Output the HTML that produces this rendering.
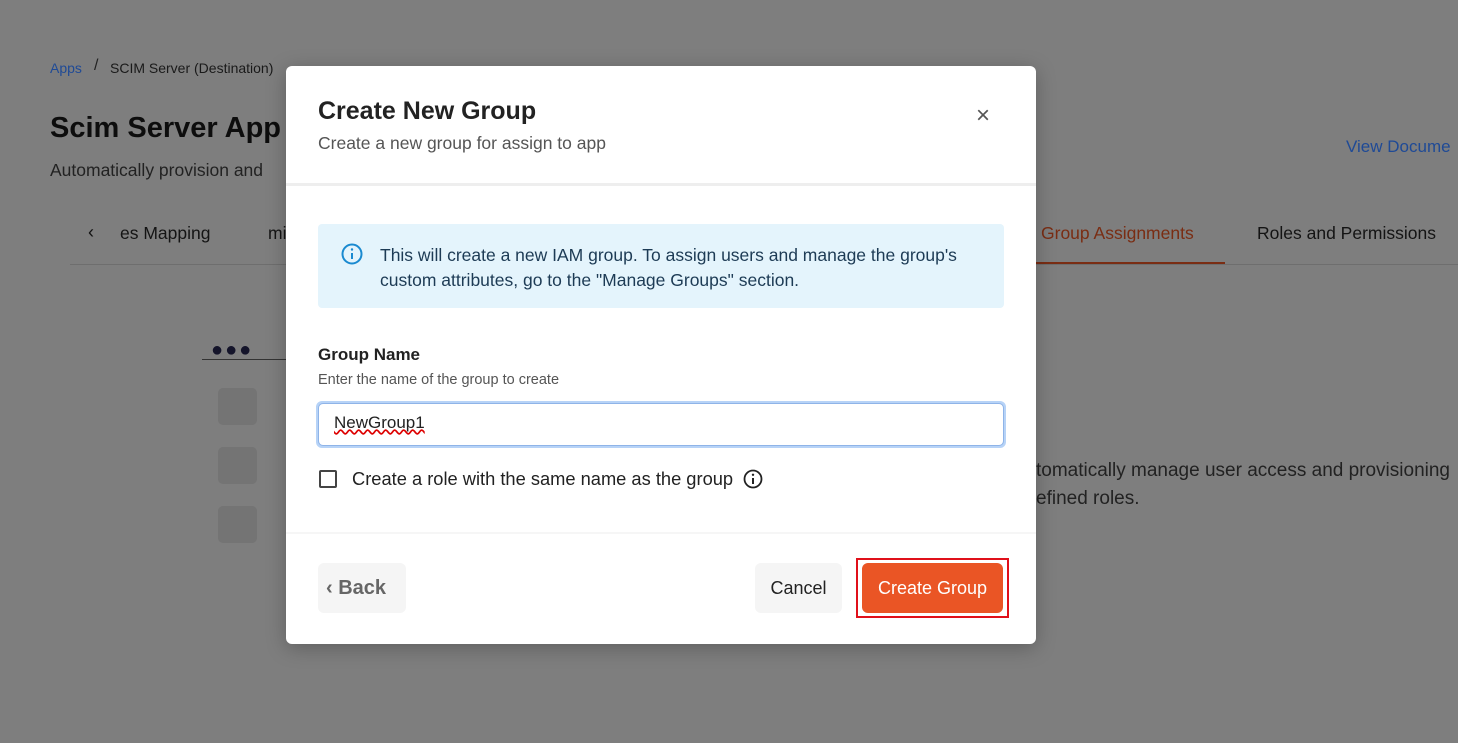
<!DOCTYPE html>
<html><head><style>
*{box-sizing:border-box;margin:0;padding:0}
body{width:1458px;height:743px;overflow:hidden;background:#7e7e7e;font-family:"Liberation Sans",sans-serif;position:relative}
.a{position:absolute;white-space:nowrap}
.m{position:absolute;left:286px;top:66px;width:750px;height:578px;background:#fff;border-radius:6px;box-shadow:0 4px 20px rgba(0,0,0,.25)}
</style></head><body>
<div class="a" style="left:50px;top:60px;font-size:14px;color:#1f4a96">Apps</div>
<div class="a" style="left:94px;top:57px;font-size:16px;color:#222">/</div>
<div class="a" style="left:110px;top:60px;font-size:14px;color:#1a1a1a">SCIM Server (Destination)</div>
<div class="a" style="left:50px;top:112px;font-size:29px;font-weight:bold;color:#0d0d0d">Scim Server App</div>
<div class="a" style="left:50px;top:160px;font-size:17.5px;color:#222">Automatically provision and</div>
<div class="a" style="left:1346px;top:137px;font-size:17px;color:#1f4a96">View Docume</div>
<div class="a" style="left:88px;top:222px;font-size:18px;color:#111">‹</div>
<div class="a" style="left:120px;top:223px;font-size:17.5px;color:#141414">es Mapping</div>
<div class="a" style="left:268px;top:223px;font-size:17.5px;color:#141414">mi</div>
<div class="a" style="left:1041px;top:223px;font-size:17.5px;color:#7a2d13">Group Assignments</div>
<div class="a" style="left:1257px;top:223px;font-size:17.5px;color:#141414">Roles and Permissions</div>
<div class="a" style="left:70px;top:264px;width:1388px;height:1px;background:#6e6e6e"></div>
<div class="a" style="left:1036px;top:262px;width:189px;height:2px;background:#7a2d13"></div>
<div class="a" style="left:211px;top:339px;font-size:20px;color:#14142a;letter-spacing:2px">●●●</div>
<div class="a" style="left:202px;top:359px;width:84px;height:1px;background:#333"></div>
<div class="a" style="left:218px;top:388px;width:39px;height:37px;background:#747474;border-radius:5px"></div>
<div class="a" style="left:218px;top:447px;width:39px;height:37px;background:#747474;border-radius:5px"></div>
<div class="a" style="left:218px;top:506px;width:39px;height:37px;background:#747474;border-radius:5px"></div>
<div class="a" style="left:1036px;top:460px;font-size:19px;color:#222">tomatically manage user access and provisioning</div>
<div class="a" style="left:1036px;top:488px;font-size:19px;color:#222">efined roles.</div>
<div class="m">
 <div class="a" style="left:32px;top:31px;font-size:25px;font-weight:bold;color:#222">Create New Group</div>
 <div class="a" style="left:32px;top:67px;font-size:17.5px;color:#555">Create a new group for assign to app</div>
 <div class="a" style="left:690px;top:36px;font-size:24px;color:#555">×</div>
 <div class="a" style="left:0;top:117px;width:750px;height:3px;background:#eee"></div>
 <div class="a" style="left:32px;top:158px;width:686px;height:84px;background:#e4f4fc;border-radius:4px"></div>
 <svg class="a" style="left:55px;top:177px" width="22" height="22" viewBox="0 0 22 22"><circle cx="11" cy="11" r="9.5" fill="none" stroke="#1a8ad0" stroke-width="2"/><line x1="11" y1="10" x2="11" y2="16" stroke="#1a8ad0" stroke-width="2"/><circle cx="11" cy="6.5" r="1.2" fill="#1a8ad0"/></svg>
 <div class="a" style="left:94px;top:177px;font-size:17.5px;color:#1d3b55;line-height:25px">This will create a new IAM group. To assign users and manage the group's<br>custom attributes, go to the "Manage Groups" section.</div>
 <div class="a" style="left:32px;top:279px;font-size:17px;font-weight:bold;color:#222">Group Name</div>
 <div class="a" style="left:32px;top:306px;font-size:14.5px;color:#555">Enter the name of the group to create</div>
 <div class="a" style="left:30px;top:335px;width:690px;height:47px;border:3px solid #b7d3f7;border-radius:6px"></div>
 <div class="a" style="left:32px;top:337px;width:686px;height:43px;border:1px solid #8fb4e8;border-radius:5px"></div>
 <div class="a" style="left:48px;top:347px;font-size:17px;color:#222;text-decoration:underline wavy #d00;text-decoration-skip-ink:none">NewGroup1</div>
 <div class="a" style="left:33px;top:404px;width:18px;height:18px;border:2px solid #444;border-radius:2px"></div>
 <div class="a" style="left:66px;top:402px;font-size:18.3px;color:#222">Create a role with the same name as the group</div>
 <svg class="a" style="left:457px;top:403px" width="20" height="20" viewBox="0 0 20 20"><circle cx="10" cy="10" r="8.5" fill="none" stroke="#222" stroke-width="1.8"/><line x1="10" y1="9" x2="10" y2="15" stroke="#222" stroke-width="2"/><circle cx="10" cy="5.8" r="1.2" fill="#222"/></svg>
 <div class="a" style="left:0;top:466px;width:750px;height:2px;background:#f6f6f6"></div>
 <div class="a" style="left:32px;top:497px;width:88px;height:50px;background:#f5f5f5;border-radius:6px;font-size:20px;font-weight:bold;color:#666;line-height:50px;padding-left:8px">‹&nbsp;Back</div>
 <div class="a" style="left:469px;top:497px;width:87px;height:50px;background:#f5f5f5;border-radius:6px;font-size:18px;color:#222;line-height:50px;text-align:center">Cancel</div>
 <div class="a" style="left:570px;top:492px;width:153px;height:60px;border:2px solid #e0101a"></div>
 <div class="a" style="left:576px;top:497px;width:141px;height:50px;background:#ea5525;border-radius:6px;font-size:18px;color:#fff;line-height:50px;text-align:center">Create Group</div>
</div>
</body></html>
